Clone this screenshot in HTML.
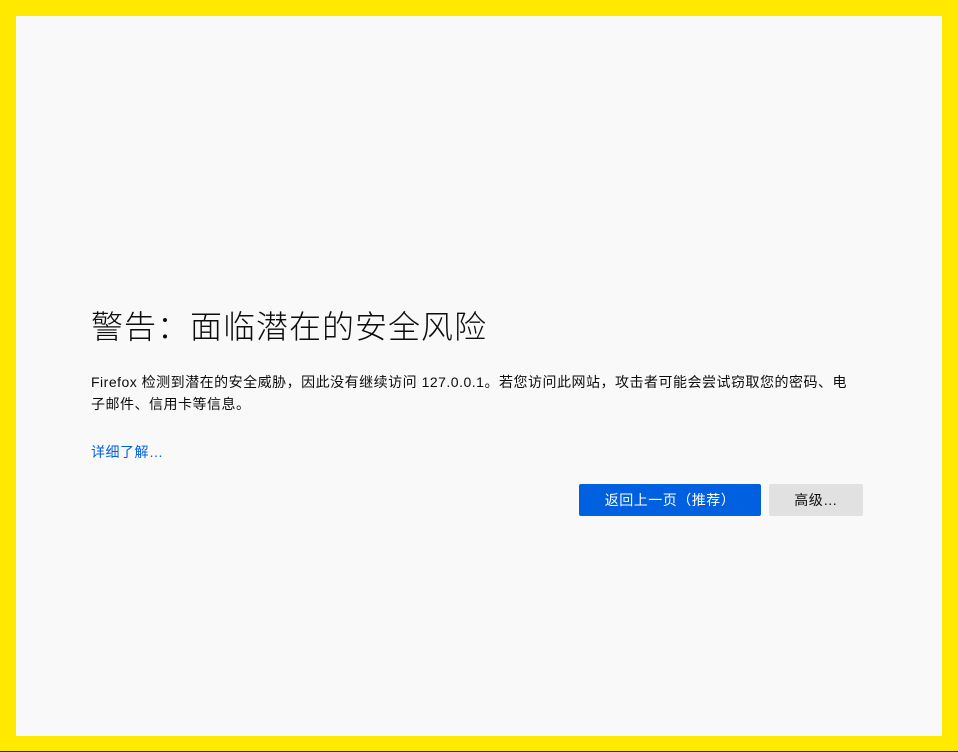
<!DOCTYPE html>
<html><head><meta charset="utf-8"><style>
html,body{margin:0;padding:0;width:958px;height:752px;overflow:hidden;background:#ffe900;}
body{position:relative;font-family:"Liberation Sans","Noto Sans CJK SC",sans-serif;}
.page{position:absolute;left:16px;top:16px;width:926px;height:720px;background:#f9f9fa;}
.bl{position:absolute;left:0;top:751px;width:958px;height:1px;background:#222;}
h1{position:absolute;left:75px;top:287px;margin:0;font-size:32px;font-weight:300;color:#0c0c0d;white-space:nowrap;line-height:48px;letter-spacing:1px;}
p{position:absolute;left:75px;top:355px;width:768px;margin:0;font-size:14px;line-height:22px;color:#0c0c0d;letter-spacing:0.5px;}
a{position:absolute;left:75px;top:425px;font-size:14px;line-height:22px;color:#0060df;text-decoration:none;letter-spacing:0.5px;}
.b{position:absolute;top:468px;height:32px;line-height:32px;text-align:center;font-size:14px;border-radius:2px;letter-spacing:0.5px;}
.b1{left:563px;width:182px;background:#0060df;color:#fff;}
.b2{left:753px;width:94px;background:#e1e1e2;color:#0c0c0d;}
</style></head><body>
<div class="page">
<h1>警告：面临潜在的安全风险</h1>
<p>Firefox 检测到潜在的安全威胁，因此没有继续访问 127.0.0.1。若您访问此网站，攻击者可能会尝试窃取您的密码、电子邮件、信用卡等信息。</p>
<a>详细了解…</a>
<div class="b b1">返回上一页（推荐）</div>
<div class="b b2">高级…</div>
</div>
<div class="bl"></div>
</body></html>
